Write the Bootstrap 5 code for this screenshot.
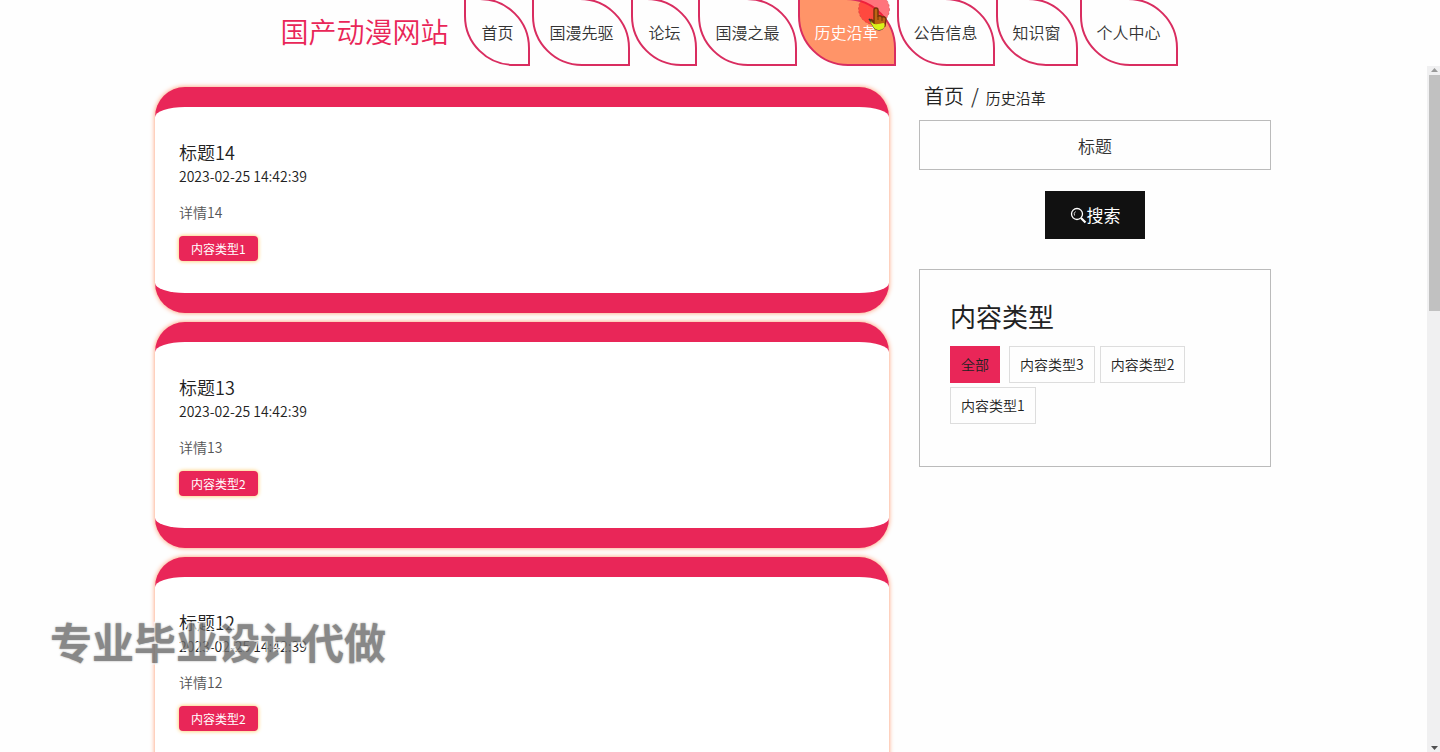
<!DOCTYPE html>
<html lang="zh-CN">
<head>
<meta charset="utf-8">
<meta name="viewport" content="width=device-width, initial-scale=1">
<title>国产动漫网站</title>
<link href="https://cdn.jsdelivr.net/npm/bootstrap@5.3.0/dist/css/bootstrap.min.css" rel="stylesheet">
<style>
:root { --brand: #e92658; --ink: #222; }
body { font-family: "Noto Sans CJK SC", sans-serif; font-weight: 350; color: var(--ink); background: #fefefe; }
a { color: inherit; text-decoration: none; }
.site-header { height: 66px; padding-left: 18px; }
.site-brand { font-size: 28px; color: var(--brand); line-height: 1; margin: 0 16px 4px 0; }
.site-menu { gap: 1px; margin-top: -2px; }
.site-menu .leaf { height: 68px; padding: 0 15px; border: 2px solid #d92d60; border-radius: 0 50px; font-size: 16px; line-height: 22px; color: #333; }
.site-menu .leaf.active { background: #ff9468; color: #fff; }
.site-menu .spaced { margin-right: 1px; }
.pointer { top: -8px; right: 4px; }
.page-grid { max-width: 1146px; padding: 0 15px; }
.page-grid > .row { --bs-gutter-x: 30px; }
.feed { padding-top: 21px; }
.post { border: solid var(--brand); border-width: 20px 0; border-radius: 30px; padding: 32px 24px; margin-bottom: 9px; box-shadow: 0 0 5px #ff9468; background: #fff; }
.post h2 { font-size: 18px; line-height: 27px; font-weight: 350; }
.post time { font-size: 14px; line-height: 20px; margin-bottom: 15px; }
.post p { font-size: 14px; line-height: 22px; margin-bottom: 13px; color: #555; }
.kind { background: var(--brand); color: #fff; font-size: 12px; font-weight: 400; line-height: 25px; padding: 0 12px; border-radius: 4px; box-shadow: 0 0 4px #ffc04d; }
.crumbs { padding: 14px 5px 8px; line-height: 32px; font-size: 20px; --bs-breadcrumb-divider-color: #333; --bs-breadcrumb-item-padding-x: 7px; --bs-breadcrumb-item-active-color: #222; }
.crumbs li { height: 32px; }
.crumbs .active a { font-size: 15px; }
.search-box { height: 50px; border: 1px solid #bbb; border-radius: 0; font-size: 17px; font-weight: 350; background: transparent; }
.search-box::placeholder { color: #333; opacity: 1; }
.search-btn { width: 100px; height: 48px; margin: 21px 0 30px; background: #111; color: #fff; border-radius: 0; font-size: 17px; padding: 0; font-weight: 400; }
.search-btn:hover { background: #333; color: #fff; }
.kinds { border: 1px solid #bbb; padding: 30px 30px 42px; }
.kinds h3 { font-size: 26px; line-height: 32px; font-weight: 400; margin-bottom: 14px; }
.kinds ul { gap: 4px 5px; }
.kinds li a { display: block; border: 1px solid #ddd; padding: 0 10px; line-height: 35px; font-size: 14px; }
.kinds li.current { margin-right: 4px; }
.kinds li.current a { background: var(--brand); border-color: var(--brand); }
.scroll-rail { width: 14px; background: #f0f0f1; border-left: 1px solid #fefefe; padding: 1px 0 1px 2px; }
.scroll-rail svg { height: 8px; }
.scroll-thumb { height: 236px; background: #c1c1c1; }
.overlay-mark { left: 50px; bottom: 84px; font-size: 42px; line-height: 54px; font-weight: 700; color: #6b6b6b; opacity: .8; -webkit-text-stroke: 3px #fff; paint-order: stroke fill; text-shadow: 0 0 2px #888; pointer-events: none; }
</style>
</head>
<body>
<div class="vh-100 d-flex flex-column overflow-hidden position-relative">
  <header class="site-header d-flex justify-content-center flex-shrink-0">
    <a class="site-brand align-self-center" href="#">国产动漫网站</a>
    <nav class="site-menu d-flex text-nowrap">
      <a class="leaf spaced d-flex align-items-center" href="#">首页</a>
      <a class="leaf d-flex align-items-center" href="#">国漫先驱</a>
      <a class="leaf d-flex align-items-center" href="#">论坛</a>
      <a class="leaf d-flex align-items-center" href="#">国漫之最</a>
      <a class="leaf active d-flex align-items-center position-relative" href="#">历史沿革
        <svg class="pointer position-absolute" width="32" height="42" viewBox="0 0 32 42" aria-hidden="true">
          <circle cx="16" cy="17" r="15.5" fill="#ff1824" fill-opacity=".6" stroke="#c94040" stroke-dasharray="2 2" stroke-opacity=".6"/>
          <path d="M11 27c4 3 8 5 14 2 3 4 1 8-4 9-5 0-6-4-10-11z" fill="#d9f21a" stroke="#333" stroke-width="1.2"/>
          <path d="M16 30V18q0-2 2-2t2 2v6q3-1 4 1 3-1 4 2l-1 7q-4 2-8 1l-6-7q0-2 3 2z" fill="#bd6413" stroke="#74320b" stroke-width="1.4"/>
          <path d="M20 24v4M24 25v4" stroke="#74320b"/>
          <path d="M11 28c4 6 9 4 15 3 2 4-1 7-5 7-5 0-6-4-10-10z" fill="#d9f21a"/>
        </svg>
      </a>
      <a class="leaf d-flex align-items-center" href="#">公告信息</a>
      <a class="leaf spaced d-flex align-items-center" href="#">知识窗</a>
      <a class="leaf d-flex align-items-center" href="#">个人中心</a>
    </nav>
  </header>

  <div class="d-flex flex-grow-1 overflow-hidden">
    <main class="flex-grow-1 overflow-hidden">
      <div class="page-grid mx-auto">
        <div class="row">
          <section class="feed col-8">
            <article class="post d-flex flex-column align-items-start">
              <h2 class="m-0"><a href="#">标题14</a></h2>
              <time>2023-02-25 14:42:39</time>
              <p>详情14</p>
              <a class="kind" href="#">内容类型1</a>
            </article>
            <article class="post d-flex flex-column align-items-start">
              <h2 class="m-0"><a href="#">标题13</a></h2>
              <time>2023-02-25 14:42:39</time>
              <p>详情13</p>
              <a class="kind" href="#">内容类型2</a>
            </article>
            <article class="post d-flex flex-column align-items-start">
              <h2 class="m-0"><a href="#">标题12</a></h2>
              <time>2023-02-25 14:42:39</time>
              <p>详情12</p>
              <a class="kind" href="#">内容类型2</a>
            </article>
          </section>
          <aside class="col-4">
            <nav aria-label="breadcrumb">
              <ol class="breadcrumb crumbs m-0">
                <li class="breadcrumb-item"><a href="#">首页</a></li>
                <li class="breadcrumb-item active" aria-current="page"><a href="#">历史沿革</a></li>
              </ol>
            </nav>
            <form class="text-center">
              <input class="form-control search-box text-center" type="text" placeholder="标题" aria-label="标题">
              <button class="btn search-btn d-inline-flex align-items-center justify-content-center" type="button">
                <svg width="17" height="17" viewBox="0 0 17 17" fill="none" stroke="#fff" aria-hidden="true">
                  <circle cx="7" cy="7" r="5.5" stroke-width="1.3"/>
                  <path d="M4.5 8.5Q3.5 6 5.5 4.500" stroke-width=".8"/>
                  <path d="M11 11l4.500 4.500" stroke-width="2.200"/>
                </svg>搜索</button>
            </form>
            <section class="kinds">
              <h3>内容类型</h3>
              <ul class="list-unstyled d-flex flex-wrap m-0">
                <li class="current"><a href="#">全部</a></li>
                <li><a href="#">内容类型3</a></li>
                <li><a href="#">内容类型2</a></li>
                <li><a href="#">内容类型1</a></li>
              </ul>
            </section>
          </aside>
        </div>
      </div>
    </main>
    <div class="scroll-rail d-flex flex-column flex-shrink-0" aria-hidden="true">
      <svg viewBox="0 0 11 8"><path d="M2 5l3.500-4L9 5z" fill="#999"/></svg>
      <div class="scroll-thumb"></div>
      <svg class="mt-auto" viewBox="0 0 11 8"><path d="M2 3l3.500 4L9 3z" fill="#505050"/></svg>
    </div>
  </div>
  <div class="overlay-mark position-absolute text-nowrap">专业毕业设计代做</div>
</div>
<script src="https://cdn.jsdelivr.net/npm/bootstrap@5.3.0/dist/js/bootstrap.bundle.min.js"></script>
</body>
</html>
